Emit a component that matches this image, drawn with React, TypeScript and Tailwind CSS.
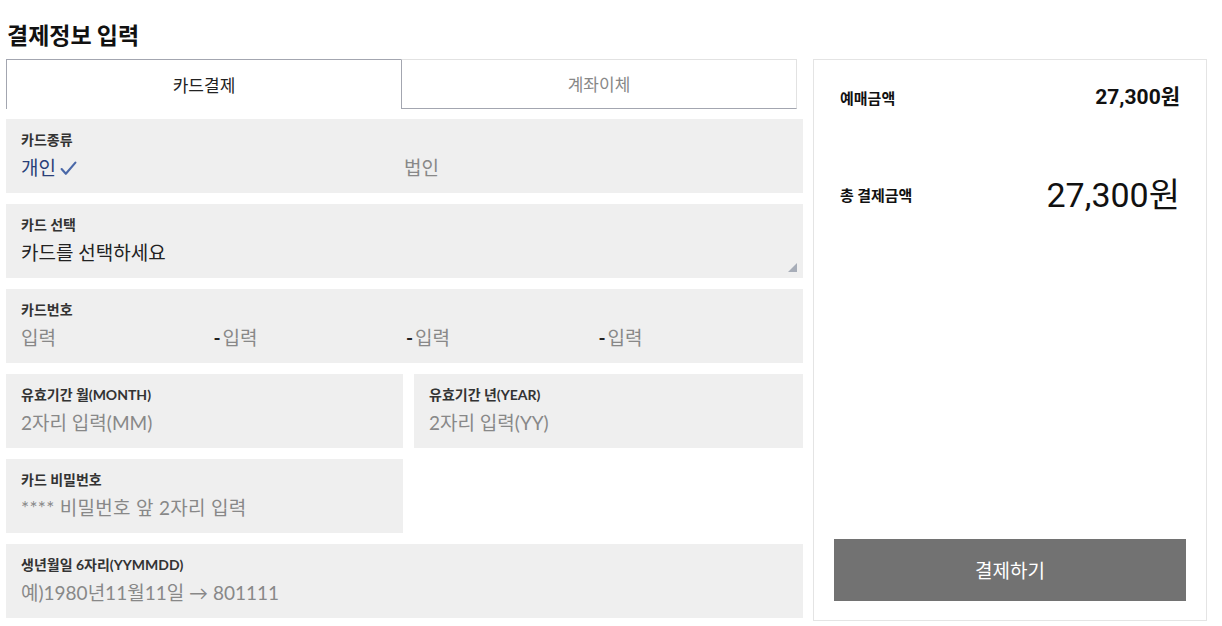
import React from 'react';

const font = "font-['Lato','Noto_Sans_CJK_KR',sans-serif]";

function Field({ label, children, className = '' }: { label: string; children: React.ReactNode; className?: string }) {
  return (
    <div className={`relative flex flex-col bg-[#efefef] px-[15px] pt-[12px] pb-[12px] ${className}`}>
      <p className="text-[14px] font-bold leading-[18px] text-[#333]">{label}</p>
      <div className="mt-[6px] text-[19px] leading-[26px]">{children}</div>
    </div>
  );
}

function Dash() {
  return <span className="font-bold text-[#222] mr-[2px]">-</span>;
}

export default function App() {
  return (
    <div className={`w-[1222px] h-[626px] overflow-hidden bg-white ${font}`}>
      <div className="flex gap-[10px] pl-[6px] pt-[20px]">
        <div className="w-[797px] flex flex-col">
          <h1 className="pl-[1px] text-[23px] font-bold leading-[28px] text-[#111] font-['Noto_Sans_CJK_KR',sans-serif]">결제정보 입력</h1>

          <div className="mt-[11px] flex w-[791px] h-[50px]">
            <button className="w-[395px] border-t border-l border-[#a3a6b0] bg-white text-[17px] text-[#222] font-['Noto_Sans_CJK_KR',sans-serif]">
              카드결제
            </button>
            <button className="flex-1 border border-[#e2e2e2] border-l-[#a3a6b0] border-b-[#a3a6b0] bg-white text-[17px] text-[#888] font-['Noto_Sans_CJK_KR',sans-serif]">
              계좌이체
            </button>
          </div>

          <div className="mt-[10px] flex flex-col gap-[11px]">
            <Field label="카드종류">
              <div className="flex">
                <span className="w-[383px] flex items-center gap-[4px] text-[#2a3f78]">
                  개인
                  <svg width="17" height="15" viewBox="0 0 16 14" fill="none">
                    <path d="M1.5 7.5 L5.5 12 L14.5 1.5" stroke="#4a68a8" strokeWidth="2" strokeLinecap="round" strokeLinejoin="round" />
                  </svg>
                </span>
                <span className="text-[#888]">법인</span>
              </div>
            </Field>

            <Field label="카드 선택">
              <span className="text-[#222]">카드를 선택하세요</span>
              <svg className="absolute right-[6px] bottom-[6px]" width="9" height="9" viewBox="0 0 9 9">
                <path d="M9 0 L9 9 L0 9 Z" fill="#a7adb8" />
              </svg>
            </Field>

            <Field label="카드번호">
              <div className="grid grid-cols-4 text-[#888] w-[770px]">
                <span>입력</span>
                <span>
                  <Dash />입력
                </span>
                <span>
                  <Dash />입력
                </span>
                <span>
                  <Dash />입력
                </span>
              </div>
            </Field>

            <div className="flex gap-[11px]">
              <Field label="유효기간 월(MONTH)" className="w-[397px]">
                <span className="text-[#888]">2자리 입력(MM)</span>
              </Field>
              <Field label="유효기간 년(YEAR)" className="flex-1">
                <span className="text-[#888]">2자리 입력(YY)</span>
              </Field>
            </div>

            <Field label="카드 비밀번호" className="w-[397px]">
              <span className="text-[#888] tracking-[0.3px]">**** 비밀번호 앞 2자리 입력</span>
            </Field>

            <Field label="생년월일 6자리(YYMMDD)">
              <span className="text-[#888]">예)1980년11월11일 → 801111</span>
            </Field>
          </div>
        </div>

        <div className="mt-[39px] w-[394px] h-[562px] flex flex-col border border-[#e4e4e4] px-[20px] pb-[19px] font-['Roboto','Noto_Sans_CJK_KR',sans-serif]">
          <div className="mt-[22px] flex items-center justify-between px-[6px]">
            <span className="text-[15px] font-bold text-[#111] font-['Noto_Sans_CJK_KR',sans-serif]">예매금액</span>
            <span className="text-[21px] font-bold text-[#111]">27,300원</span>
          </div>
          <div className="mt-[56px] flex items-center justify-between px-[6px]">
            <span className="text-[15px] font-bold text-[#111] font-['Noto_Sans_CJK_KR',sans-serif]">총 결제금액</span>
            <span className="text-[34px] text-[#111]">27,300원</span>
          </div>
          <div className="flex-1" />
          <button className="h-[62px] w-full bg-[#727272] text-[19px] text-white font-['Noto_Sans_CJK_KR',sans-serif]">
            결제하기
          </button>
        </div>
      </div>
    </div>
  );
}
